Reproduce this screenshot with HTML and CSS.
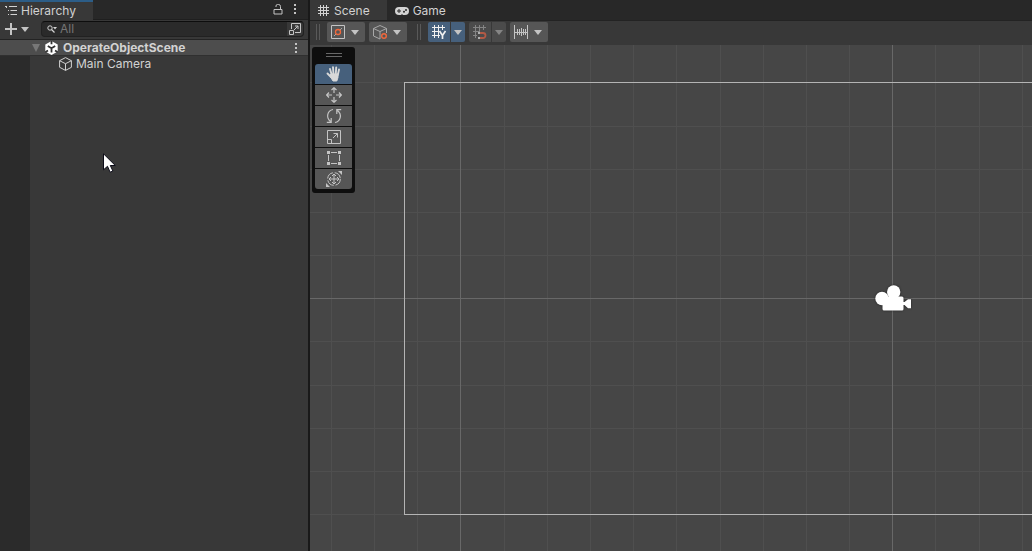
FILE: index.html
```html
<!DOCTYPE html>
<html lang="en">
  <head>
    <meta charset="UTF-8" />
    <meta name="viewport" content="width=device-width, initial-scale=1.0" />
    <title>OperateObjectScene</title>
    <link rel="stylesheet" href="styles.css">
  </head>
  <body>
    <div class="editor">
      <aside class="hierarchy">
        <div class="tab-bar">
          <button type="button" class="tab tab-focused">
            <svg width="12" height="12" viewBox="0 0 12 12" fill="none" stroke="currentColor">
              <path d="M0 1.5h2M4 1.5h8M3 5.5h1M5.5 5.5H12M3 9.5h1M5.5 9.5H12M1.5 1v2" />
            </svg>
            Hierarchy
          </button>
          <div class="tab-actions">
            <button type="button" class="icon-button" aria-label="Lock">
              <svg width="10" height="12" viewBox="0 0 10 12" fill="none" stroke="currentColor">
                <path d="M1 5.500h8v4.500H1zM3 3V2q0-1.500 1.500-1.500h1Q7.500.5 7.500 2.500v3" />
              </svg>
            </button>
            <button type="button" class="icon-button" aria-label="Tab menu">
              <svg width="4" height="12" viewBox="0 0 4 12" fill="currentColor">
                <path d="M1 0h2v2H1zM1 4h2v2H1zM1 8h2v2H1z" />
              </svg>
            </button>
          </div>
        </div>

        <div class="search-bar">
          <button type="button" class="add-button" aria-label="Create">
            <svg width="24" height="12" viewBox="0 0 24 12">
              <path d="M0 6h12M6 0v12" stroke="currentColor" stroke-width="2" />
              <path d="M16 4h8l-4 5z" fill="currentColor" />
            </svg>
          </button>
          <div class="search-box">
            <label for="search" aria-label="Search">
              <svg width="10" height="8" viewBox="0 0 10 8" fill="none" stroke="currentColor">
                <circle cx="3" cy="3" r="2.200" />
                <path d="M4.500 4.500L7.500 7.500" stroke-width="1.200" />
                <path d="M6 2h4L8 4.500z" fill="currentColor" stroke="none" />
              </svg>
            </label>
            <input type="text" id="search" placeholder="All" />
            <button type="button" class="search-open" aria-label="Open search window">
              <svg width="12" height="12" viewBox="0 0 12 12" fill="none" stroke="currentColor">
                <path d="M2.500 6V.5h9v9H6M.5 7.500h4v4h-4zM5 7l4-4M6 3h3v3" />
              </svg>
            </button>
          </div>
        </div>

        <div class="tree">
          <div class="tree-row scene-row">
            <svg width="8" height="9" viewBox="0 0 8 9" fill="#777777">
              <path d="M0 1h8L4 9z" />
            </svg>
            <svg width="13" height="14" viewBox="0 0 13 14">
              <path d="M6.500 0L12.700 3.500v7L6.500 14 .3 10.500v-7z" fill="#ffffff" />
              <path d="M6.500 7.200V11.500M6.500 7.200L2.800 5M6.500 7.200L10.200 5M6.500 0v3.200M.3 11l2.700-1.600M12.700 11l-2.700-1.600" fill="none" stroke="#333333" stroke-width="1.800" />
            </svg>
            <span class="scene-name">OperateObjectScene</span>
            <button type="button" class="icon-button scene-menu" aria-label="Scene menu">
              <svg width="4" height="12" viewBox="0 0 4 12" fill="currentColor">
                <path d="M1 1h2v2H1zM1 5h2v2H1zM1 9h2v2H1z" />
              </svg>
            </button>
          </div>
          <div class="tree-body">
            <div class="tree-row object-row">
              <svg width="13" height="14" viewBox="0 0 13 14" fill="none" stroke="currentColor">
                <path d="M6.500 .6L12.400 3.700v6.600L6.500 13.400 .6 10.300V3.700zM.6 3.700l5.900 3 5.900-3M6.500 6.700v6.700" />
              </svg>
              <span>Main Camera</span>
            </div>
          </div>
        </div>
      </aside>

      <main class="scene">
        <div class="tab-bar">
          <button type="button" class="tab tab-active">
            <svg width="12" height="11" viewBox="0 0 12 11" stroke="currentColor">
              <path d="M0 2.500h11M0 5.500h11M0 8.500h11M2.500 0v11M5.500 0v11M8.500 0v11" />
            </svg>
            Scene
          </button>
          <button type="button" class="tab">
            <svg width="14" height="8" viewBox="0 0 14 8">
              <rect width="14" height="8" rx="4" fill="#d2d2d2" />
              <path d="M2 4h4M4 2v4" stroke="#282828" />
              <circle cx="9" cy="4.800" r="1" fill="#282828" />
              <circle cx="11" cy="3" r="1" fill="#282828" />
              <path d="M6 8l1-1 1 1z" fill="#282828" />
            </svg>
            Game
          </button>
        </div>

        <div class="toolbar">
          <span class="grip"></span>
          <button type="button" class="tool-button" aria-label="Pivot">
            <svg width="14" height="14" viewBox="0 0 14 14" fill="none" stroke="currentColor">
              <path d="M.5.5h13v13H.5z" />
              <path d="M3 11l2-2M9 5l2-2" stroke="#a8a8a8" />
              <circle cx="7" cy="7" r="2.500" stroke="#f2683c" stroke-width="1.300" />
            </svg>
            <svg class="arrow" width="8" height="5" viewBox="0 0 8 5"><path d="M0 0h8L4 5z" /></svg>
          </button>
          <button type="button" class="tool-button" aria-label="Handle orientation">
            <svg width="14" height="15" viewBox="0 0 14 15" fill="none" stroke="#a8a8a8">
              <path d="M7 14L.5 11V3.500L7 .5l6.500 3V8M.5 3.500L7 6.500l6.500-3M7 6.500V14" />
              <circle cx="11" cy="11" r="2.300" fill="#565656" stroke="#f2683c" stroke-width="1.400" />
            </svg>
            <svg class="arrow" width="8" height="5" viewBox="0 0 8 5"><path d="M0 0h8L4 5z" /></svg>
          </button>
          <span class="grip grip-second"></span>
          <div class="split">
            <button type="button" class="split-main on" aria-label="Grid axis Y">
              <svg width="14" height="14" viewBox="0 0 14 14" fill="none" stroke="#f0f0f0">
                <path d="M0 2.500h13M0 6.500h7M0 10.500h8M2.500 0v13M6.500 0v13M10.500 0v5" />
                <path d="M7.500 6l3 4.500 3-4.500M10.500 10v4" stroke-width="1.700" />
              </svg>
            </button>
            <button type="button" class="split-menu on" aria-label="Grid options">
              <svg class="arrow" width="8" height="5" viewBox="0 0 8 5"><path d="M0 0h8L4 5z" /></svg>
            </button>
          </div>
          <div class="split">
            <button type="button" class="split-main off" aria-label="Grid snapping" disabled>
              <svg width="14" height="14" viewBox="0 0 14 14" fill="none" stroke="#858585">
                <path d="M0 2.500h13M0 6.500h7M0 10.500h4M2.500 0v13M6.500 0v6M10.500 0v5" />
                <path d="M7 8h3a2.500 2.500 0 0 1 0 5H7" stroke="#b35a45" stroke-width="1.800" />
                <path d="M5 8h2M5 13h2" stroke="#b0b0b0" stroke-width="2" />
              </svg>
            </button>
            <button type="button" class="split-menu off" aria-label="Snap options" disabled>
              <svg class="arrow" width="8" height="5" viewBox="0 0 8 5"><path d="M0 0h8L4 5z" /></svg>
            </button>
          </div>
          <button type="button" class="tool-button" aria-label="Snap increment">
            <svg width="14" height="14" viewBox="0 0 14 14" stroke="currentColor">
              <path d="M.5 0v14M13.500 0v14M0 7.500h14M3.500 4v6M5.500 4v6M7.500 3v8M9.500 4v6M11.500 4v6" />
            </svg>
            <svg class="arrow" width="8" height="5" viewBox="0 0 8 5"><path d="M0 0h8L4 5z" /></svg>
          </button>
        </div>

        <div class="viewport">
          <svg class="canvas" width="100%" height="100%" shape-rendering="crispEdges" fill="none">
            <!-- minor grid -->
            <path class="grid-minor" d="M21.500 0v4000M64.500 0v4000M107.500 0v4000M194.500 0v4000M237.500 0v4000M280.500 0v4000M323.500 0v4000M366.500 0v4000M410.500 0v4000M453.500 0v4000M496.500 0v4000M539.500 0v4000M625.500 0v4000M669.500 0v4000M712.500 0v4000" />
            <path class="grid-minor" d="M0 37.500h4000M0 81.500h4000M0 124.500h4000M0 167.500h4000M0 210.500h4000M0 296.500h4000M0 340.500h4000M0 383.500h4000M0 426.500h4000M0 469.500h4000" />
            <!-- major grid -->
            <path class="grid-major" d="M150.500 0v4000M582.500 0v4000M0 253.500h4000" />
            <!-- camera bounds -->
            <rect class="bounds" x="94.500" y="37.500" width="976" height="432" />
          </svg>

          <svg class="camera" width="40" height="30" viewBox="0 0 40 30" fill="#ffffff">
            <circle cx="8" cy="13.500" r="6.700" />
            <circle cx="19.700" cy="7" r="6.700" />
            <rect x="8.500" y="11.500" width="21" height="14" rx="1.500" />
            <path d="M29 17h1.500L34 14.300h3v9h-3L30.500 20H29z" />
          </svg>

          <div class="tools">
            <span class="tools-grip"></span>
            <button type="button" class="tool on" aria-label="View tool">
              <svg width="16" height="16" viewBox="0 0 16 16" fill="none" stroke="#d8d8d8" stroke-linecap="round" stroke-linejoin="round">
                <path d="M4 3l1.500 5M7 1.200L7.500 8M10.200 1.500L9.800 8M13 3.500L11.800 9M1.500 7.500L5 11" stroke-width="1.900" />
                <path d="M5 8l7 0v3.500L10.800 15H7L4.500 11z" fill="#d8d8d8" />
              </svg>
            </button>
            <button type="button" class="tool" aria-label="Move tool">
              <svg width="16" height="16" viewBox="0 0 16 16" fill="none" stroke="currentColor" stroke-width="1.200">
                <path d="M8 1v5M8 10v5M1 8h5M10 8h5M5.500 3L8 .7 10.500 3M5.500 13L8 15.300 10.500 13M3 5.500L.7 8 3 10.500M13 5.500L15.300 8 13 10.500" />
              </svg>
            </button>
            <button type="button" class="tool" aria-label="Rotate tool">
              <svg width="16" height="16" viewBox="0 0 16 16" fill="none" stroke="currentColor" stroke-width="1.200">
                <path d="M7 1.500C1.500 2.500-.5 9.500 4.500 13.500M.8 14.300h4.400V10M9 14.500C14.500 13.500 16.500 6.500 11.500 2.500M15.200 1.700h-4.400V6" />
              </svg>
            </button>
            <button type="button" class="tool" aria-label="Scale tool">
              <svg width="14" height="14" viewBox="0 0 14 14" fill="none" stroke="currentColor">
                <path d="M.5.5h13v13H.5zM.5 9.500h4v4M6 8l4.500-4.500M6.500 3.500h4v4" />
              </svg>
            </button>
            <button type="button" class="tool" aria-label="Rect tool">
              <svg width="14" height="14" viewBox="0 0 14 14">
                <path d="M0 0h3v3H0zM11 0h3v3h-3zM0 11h3v3H0zM11 11h3v3h-3z" fill="currentColor" />
                <path d="M4 1.500h6M4 12.500h6M1.500 4v6M12.500 4v6" stroke="currentColor" />
              </svg>
            </button>
            <button type="button" class="tool" aria-label="Transform tool">
              <svg width="16" height="16" viewBox="0 0 16 16" fill="none" stroke="currentColor">
                <circle cx="8" cy="8" r="6.300" stroke-dasharray="8 1.900" />
                <path d="M8 3v10M3 8h10M6 5l2-2 2 2M6 11l2 2 2-2M5 6L3 8l2 2M11 6l2 2-2 2" />
                <path d="M12 0h4v4zM0 12v4h4z" fill="currentColor" stroke="none" />
              </svg>
            </button>
          </div>
        </div>
      </main>
    </div>

    <svg class="cursor" width="14" height="21" viewBox="0 0 14 21">
      <path d="M.5.800v16L4.500 13.300l2.600 5.900 2.800-1.200-2.600-5.500h5z" fill="#ffffff" stroke="#0c0c18" />
    </svg>
  </body>
</html>
```
FILE: styles.css
```css
* {
  box-sizing: border-box;
}
body {
  margin: 0;
  background-color: #191919;
  color: #d2d2d2;
  font-family: Inter, sans-serif;
  font-size: 12px;
  line-height: 16px;
}
button {
  display: flex;
  align-items: center;
  justify-content: center;
  padding: 0;
  border: none;
  background: none;
  color: #c4c4c4;
  font: inherit;
}
svg {
  display: block;
  flex: none;
}
.editor {
  display: grid;
  grid-template-columns: 308px 1fr;
  gap: 2px;
  height: 100vh;
}
.hierarchy,
.scene {
  display: flex;
  flex-direction: column;
  min-width: 0;
  background-color: #383838;
}

/* tabs */
.tab-bar {
  display: flex;
  height: 20px;
  background-color: #282828;
}
.tab {
  gap: 4px;
  padding: 1px 8px 0;
  color: #d2d2d2;
}
.tab-active,
.tab-focused {
  background-color: #383838;
}
.tab-active {
  padding-right: 17px;
}
.tab-focused {
  padding: 0 17px 0 5px;
  border-top: 2px solid #2c5d87;
}
.tab-actions {
  display: flex;
  flex: 1;
  justify-content: flex-end;
  gap: 10px;
  padding-right: 11px;
  border-bottom: 1px solid #1f1f1f;
}

/* search */
.search-bar {
  display: flex;
  align-items: center;
  height: 20px;
  padding: 0 4px 1px 5px;
  border-bottom: 1px solid #232323;
}
.add-button {
  width: 24px;
}
.search-box {
  display: flex;
  flex: 1;
  align-items: center;
  height: 16px;
  margin-left: 12px;
  padding-left: 5px;
  border: 1px solid #212121;
  border-top-color: #0d0d0d;
  border-radius: 4px;
  background-color: #2a2a2a;
}
.search-box input {
  flex: 1;
  min-width: 0;
  height: 14px;
  padding: 0 3px;
  border: none;
  outline: none;
  background: none;
  color: #d2d2d2;
  font: inherit;
}
.search-box input::placeholder {
  color: #757575;
}
.search-open {
  width: 16px;
  height: 14px;
  border-radius: 0 4px 4px 0;
  background-color: #383838;
}

/* tree */
.tree {
  display: flex;
  flex: 1;
  flex-direction: column;
}
.tree-row {
  display: flex;
  align-items: center;
  height: 16px;
}
.scene-row {
  gap: 5px;
  padding: 0 10px 0 32px;
  border-bottom: 1px solid #303030;
  background-color: #4d4d4d;
}
.scene-name {
  font-weight: 700;
}
.scene-menu {
  margin-left: auto;
}
.tree-body {
  flex: 1;
  border-left: 30px solid #2b2b2b;
}
.object-row {
  gap: 4px;
  padding-left: 29px;
}

/* scene toolbar */
.toolbar {
  display: flex;
  align-items: center;
  gap: 4px;
  height: 25px;
  padding: 0 6px 2px;
  border-top: 1px solid #232323;
}
.grip {
  width: 4px;
  height: 16px;
  margin-right: 3px;
  border: 1px solid #595959;
  border-width: 0 1px;
}
.grip-second {
  margin-left: 6px;
}
.tool-button {
  justify-content: flex-start;
  gap: 6px;
  width: 38px;
  height: 20px;
  padding-left: 4px;
  border-radius: 2px;
  background-color: #565656;
}
.split {
  display: flex;
  gap: 1px;
}
.split-main,
.split-menu {
  width: 22px;
  height: 20px;
  border-radius: 2px 0 0 2px;
}
.split-menu {
  width: 14px;
  border-radius: 0 2px 2px 0;
}
.on {
  background-color: #46607c;
}
.off {
  background-color: #4b4b4b;
  color: #858585;
}
.arrow {
  fill: currentColor;
}

/* scene view */
.viewport {
  position: relative;
  flex: 1;
  overflow: hidden;
  background-color: #464646;
}
.canvas {
  position: absolute;
  inset: 0;
}
.grid-minor {
  stroke: #4f4f4f;
}
.grid-major {
  stroke: #686868;
}
.bounds {
  stroke: #b4b4b4;
}
.camera {
  position: absolute;
  left: 564px;
  top: 240px;
  filter: drop-shadow(0 0 1px #222222);
}
.tools {
  position: absolute;
  left: 2px;
  top: 2px;
  display: flex;
  flex-direction: column;
  gap: 1px;
  padding: 3px 3px 4px;
  border-radius: 3px;
  background-color: #0e0e0e;
}
.tools-grip {
  align-self: center;
  width: 16px;
  height: 4px;
  margin: 3px 0 6px;
  border: 1px solid #686868;
  border-width: 1px 0;
}
.tool {
  width: 37px;
  height: 20px;
  background-color: #565656;
}
.tool.on {
  border-radius: 3px 3px 0 0;
  background-color: #46607c;
}
.tool:last-child {
  border-radius: 0 0 3px 3px;
}
.cursor {
  position: absolute;
  left: 103px;
  top: 153px;
}
```
